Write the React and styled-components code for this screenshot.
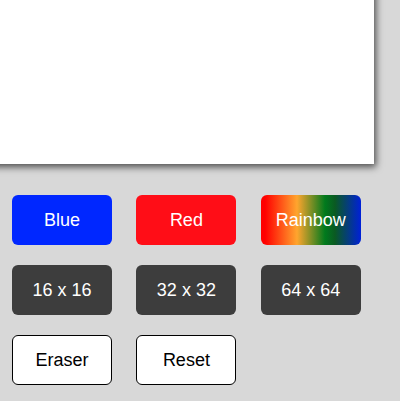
import React from "react"
import styled, { createGlobalStyle } from "styled-components"

const GlobalStyle = createGlobalStyle`
  html, body {
    margin: 0;
    padding: 0;
    background: #d8d8d8;
    overflow: hidden;
  }
  body {
    font-family: "Liberation Sans", Arial, sans-serif;
  }
`

const palette = {
  blue: { bg: "#0027ff", fg: "#fff", border: "none" },
  red: { bg: "#ff0d17", fg: "#fff", border: "none" },
  rainbow: {
    bg: "linear-gradient(to right, #ff0000 4%, #ffa52e 36%, #007a1d 64%, #0a5a22 74%, #0020d8 100%)",
    fg: "#fff",
    border: "none",
  },
  dark: { bg: "#3d3d3d", fg: "#fff", border: "none" },
  light: { bg: "#fff", fg: "#000", border: "1px solid #000" },
}

export default function App() {
  const buttons = [
    { label: "Blue", kind: "blue" },
    { label: "Red", kind: "red" },
    { label: "Rainbow", kind: "rainbow" },
    { label: "16 x 16", kind: "dark" },
    { label: "32 x 32", kind: "dark" },
    { label: "64 x 64", kind: "dark" },
    { label: "Eraser", kind: "light" },
    { label: "Reset", kind: "light" },
  ]
  return (
    <Page>
      <GlobalStyle />
      <Canvas />
      <Controls>
        {buttons.map((b) => (
          <Button key={b.label} $kind={b.kind}>
            {b.label}
          </Button>
        ))}
      </Controls>
    </Page>
  )
}

const Page = styled.div`
  width: 400px;
  height: 401px;
  overflow: hidden;
`

const Canvas = styled.div`
  width: 400px;
  height: 400px;
  margin: -236px 0 0 -26px;
  background: #fff;
  box-shadow: 2px 3px 7px rgba(0, 0, 0, 0.65);
`

const Controls = styled.div`
  display: grid;
  grid-template-columns: repeat(3, 100px);
  column-gap: 24.4px;
  row-gap: 20px;
  padding: 31px 0 0 12px;
`

const Button = styled.button`
  height: 50px;
  box-sizing: border-box;
  border: ${(p) => palette[p.$kind].border};
  border-radius: 6px;
  background: ${(p) => palette[p.$kind].bg};
  color: ${(p) => palette[p.$kind].fg};
  font-family: "Liberation Sans", Arial, sans-serif;
  font-size: 18px;
  padding: 0;
  cursor: pointer;
`
